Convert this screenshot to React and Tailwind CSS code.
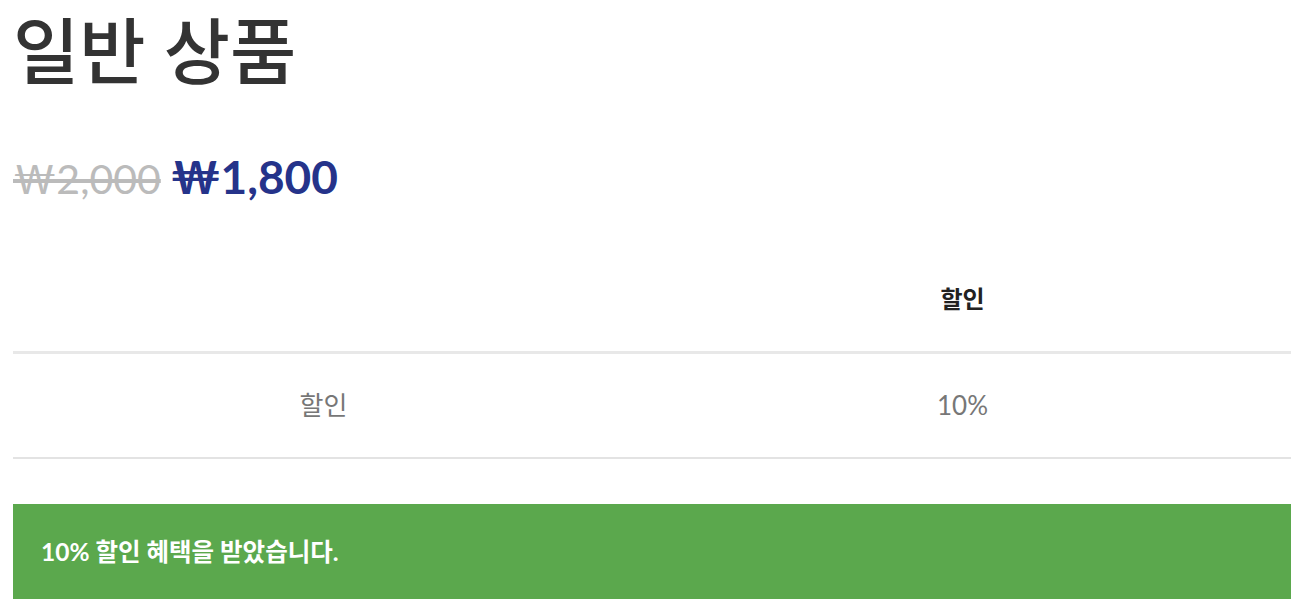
import React from "react";

export default function App() {
  return (
    <div className="bg-white px-[13px] font-['Lato','Noto_Sans_CJK_KR',sans-serif]">
      <h1 className="pt-[7px] text-[72px] font-medium leading-[1.2] text-[#333333]">일반 상품</h1>

      <p className="mt-[61px] flex items-baseline gap-[10px] leading-none">
        <del className="text-[41px] text-[#bbbbbb]">₩2,000</del>
        <span className="text-[46px] font-bold text-[#25338a]">₩1,800</span>
      </p>

      <table className="mt-[46px] w-full table-fixed border-collapse text-[26px]">
        <thead>
          <tr className="border-b-[3px] border-[#e8e8e8]">
            <th className="h-[106px] pr-[18px] text-center"></th>
            <th className="h-[106px] pr-[18px] text-center text-[24px] font-bold text-[#222222]">할인</th>
          </tr>
        </thead>
        <tbody>
          <tr className="border-b-[2px] border-[#e3e3e3]">
            <td className="h-[106px] pr-[18px] text-center text-[#777777]">할인</td>
            <td className="h-[106px] pr-[18px] text-center text-[#777777]">10%</td>
          </tr>
        </tbody>
      </table>

      <div className="mt-[45px] flex h-[95px] items-center bg-[#5ba84d] px-[28px] text-[24.5px] font-bold text-white">
        10% 할인 혜택을 받았습니다.
      </div>
    </div>
  );
}
